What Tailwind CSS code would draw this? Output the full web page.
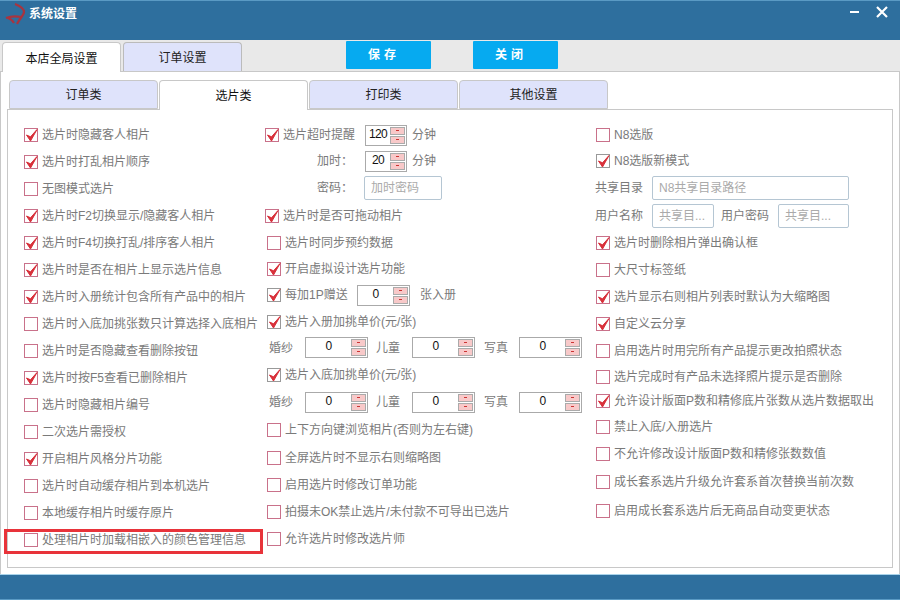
<!DOCTYPE html>
<html lang="zh-CN">
<head>
    <meta charset="UTF-8">
    <title>系统设置</title>
    <script src="https://cdn.jsdelivr.net/npm/@tailwindcss/browser@4"></script>
</head>
<body class="w-[900px] h-[600px] overflow-hidden bg-white font-['Liberation_Sans','Noto_Sans_CJK_SC',sans-serif] text-[12px] text-[#7a7a7a]">
<div id="win" class="relative w-[900px] h-[600px] flex flex-col">
    <!-- title bar -->
    <div class="h-[40px] bg-[#2e6f9e] border-t border-[#5a9ac4] flex items-start px-[5px] text-white">
        <svg class="w-[22px] h-[24px] mt-[2px]" viewBox="0 0 22 24"><path d="M10 1 C15 3 19 6 19 9 C19 12 15 15 12 21 M1 15 C6 13 11 13 16 14 M3 15 C6 16 8 18 9 20" fill="none" stroke="#a8343f" stroke-width="2.2"/></svg>
        <span class="ml-[2px] mt-[4px] font-bold">系统设置</span>
        <div class="ml-auto flex items-center gap-[16px] mt-[5px] pr-[7px]">
            <svg class="w-[10px] h-[10px]" viewBox="0 0 10 10"><rect x="0" y="4" width="9" height="2" fill="#fff"/></svg>
            <svg class="w-[12px] h-[12px]" viewBox="0 0 12 12"><path d="M1 1 L11 11 M11 1 L1 11" stroke="#fff" stroke-width="2.2"/></svg>
        </div>
    </div>
    <!-- outer tabs -->
    <div class="h-[32px] bg-[#e9e9e9] border-b border-[#c8c8c8] flex items-end pl-[2px] gap-[2px] relative">
        <div class="w-[119px] h-[30px] -mb-px pt-[2px] bg-white border border-b-0 border-[#c8c8c8] rounded-t-[4px] flex items-center justify-center text-[#111]">本店全局设置</div>
        <div class="w-[119px] h-[29px] pt-[1px] bg-[#dfe3fb] border border-b-0 border-[#bbb] rounded-t-[4px] flex items-center justify-center text-[#222]">订单设置</div>
        <button class="ml-[102px] mb-[2px] w-[85px] h-[28px] pr-[9px] bg-[#06aaf0] rounded-[1px] text-white font-bold tracking-[4px]">保存</button>
        <button class="ml-[40px] mb-[2px] w-[85px] h-[28px] pr-[9px] bg-[#06aaf0] rounded-[1px] text-white font-bold tracking-[4px]">关闭</button>
    </div>
    <!-- body -->
    <div class="flex-1 bg-white border-x border-[#c8c8c8] px-[6px] pt-[8px] flex flex-col">
        <div id="subtabs" class="h-[29px] flex gap-[1px] pl-[2px]"></div>
        <div class="h-[459px] border border-[#c8c8c8] flex">
            <div id="c1" class="w-[257px] pl-[16px] pt-[11px] flex flex-col"></div>
            <div id="c2" class="w-[330px] pt-[12px] flex flex-col"></div>
            <div id="c3" class="flex-1 pt-[11px] flex flex-col"></div>
        </div>
    </div>
    <!-- footer -->
    <div class="h-[26px] bg-[#2e6f9e] border-t border-b border-t-[#a9d3ea] border-b-[#5a9ac4]"></div>
    <!-- highlight annotation -->
    <div class="absolute left-[4px] top-[529px] w-[259px] h-[25px] border-[3px] border-[#e8333a]"></div>
</div>
<script>
    const check = `<svg class="absolute left-0 top-[-1px] w-[13px] h-[14px]" viewBox="0 0 13 14"><path d="M1.5 7 L5.5 13 L12 1.5 L5.5 8.8 Z" fill="#d8303a" stroke="#d8303a" stroke-width="1"/></svg>`
    const cb = (on, gray) => `<span class="relative shrink-0 w-[14px] h-[14px] bg-white border ${gray ? 'border-[#999]' : 'border-[#c9718a]'}">${on ? check : ''}</span>`
    const row = (h, ml, on, text, gray) => `<div class="flex items-center" style="height:${h}px;margin-left:${ml}px">${cb(on, gray)}<span class="ml-[4px] whitespace-nowrap">${text}</span></div>`
    const arrows = `<span class="flex flex-col gap-[1px] mr-[1px]"><span class="block w-[15px] h-[8px] bg-[#f8c9c9] border border-[#aaa] relative"><span class="absolute left-[5px] top-[2px] w-[3px] h-[1px] bg-[#c33]"></span></span><span class="block w-[15px] h-[8px] bg-[#f8c9c9] border border-[#aaa] relative"><span class="absolute left-[5px] top-[2px] w-[3px] h-[1px] bg-[#c33]"></span></span></span>`
    const spin = (w, v, left) => `<span class="shrink-0 h-[21px] border border-[#aaa] bg-white flex items-center justify-between text-[#111] tracking-[-0.7px]" style="width:${w}px"><span class="${left ? 'pl-[3px]' : 'flex-1 text-center'} -mt-[3px]">${v}</span>${arrows}</span>`

    // sub tabs
    document.getElementById('subtabs').innerHTML = [['订单类', 0], ['选片类', 1], ['打印类', 0], ['其他设置', 0]].map(([t, a]) =>
        `<div class="w-[149px] ${a ? 'h-[30px] pt-[1px] bg-white text-[#111] border-b-0' : 'h-[29px] bg-[#dfe3fb] text-[#222]'} relative z-10 border border-[#c8c8c8] rounded-t-[4px] flex items-center justify-center">${t}</div>`).join('')

    // left column
    const c1 = [[1, '选片时隐藏客人相片'], [1, '选片时打乱相片顺序'], [0, '无图模式选片'], [1, '选片时F2切换显示/隐藏客人相片'], [1, '选片时F4切换打乱/排序客人相片'], [1, '选片时是否在相片上显示选片信息'], [1, '选片时入册统计包含所有产品中的相片'], [0, '选片时入底加挑张数只计算选择入底相片'], [0, '选片时是否隐藏查看删除按钮'], [1, '选片时按F5查看已删除相片'], [0, '选片时隐藏相片编号'], [0, '二次选片需授权'], [1, '开启相片风格分片功能'], [0, '选片时自动缓存相片到本机选片'], [0, '本地缓存相片时缓存原片'], [0, '处理相片时加载相嵌入的颜色管理信息']]
    document.getElementById('c1').innerHTML = c1.map(([on, t]) => row(27, 0, on, t)).join('')

    // middle column
    const label = (w, t) => `<span class="shrink-0 whitespace-nowrap" style="width:${w}px">${t}</span>`
    const priceRow = (h) => `<div class="flex items-center ml-[4px]" style="height:${h}px">${label(36, '婚纱')}${spin(63, 0)}<span class="ml-[8px] w-[36px]">儿童</span>${spin(63, 0)}<span class="ml-[9px] w-[35px]">写真</span>${spin(63, 0)}</div>`
    const inputBox = (w, ph) => `<span class="shrink-0 h-[24px] border border-[#b5c6d3] rounded-[2px] bg-white flex items-center px-[6px] text-[#aaa] whitespace-nowrap overflow-hidden" style="width:${w}px">${ph}</span>`
    document.getElementById('c2').innerHTML = [
        `<div class="flex items-center h-[26px]">${cb(1)}<span class="ml-[4px] w-[82px]">选片超时提醒</span>${spin(42, 120, 1)}<span class="ml-[5px]">分钟</span></div>`,
        `<div class="flex items-center h-[26px] ml-[52px]">${label(48, '加时：')}${spin(42, 20, 1).replace('pl-[3px]', 'pl-[6px]')}<span class="ml-[5px]">分钟</span></div>`,
        `<div class="flex items-center h-[28px] ml-[52px]">${label(47, '密码：')}${inputBox(78, '加时密码')}</div>`,
        row(27, 0, 1, '选片时是否可拖动相片'),
        row(27, 2, 0, '选片时同步预约数据'),
        row(25, 2, 1, '开启虚拟设计选片功能'),
        `<div class="flex items-center h-[28px] ml-[2px]">${cb(1, 1)}<span class="ml-[4px] w-[72px]">每加1P赠送</span>${spin(53, 0)}<span class="ml-[10px]">张入册</span></div>`,
        row(25, 2, 1, '选片入册加挑单价(元/张)', 1),
        priceRow(27),
        row(28, 2, 1, '选片入底加挑单价(元/张)', 1),
        priceRow(26),
        row(30, 2, 0, '上下方向键浏览相片(否则为左右键)'),
        row(26, 2, 0, '全屏选片时不显示右则缩略图'),
        row(27, 2, 0, '启用选片时修改订单功能'),
        row(27, 2, 0, '拍摄未OK禁止选片/未付款不可导出已选片'),
        row(27, 2, 0, '允许选片时修改选片师'),
    ].join('')

    // right column
    document.getElementById('c3').innerHTML = [
        row(27, 1, 0, 'N8选版'),
        row(26, 1, 1, 'N8选版新模式', 1),
        `<div class="flex items-center h-[28px]">${label(57, '共享目录')}${inputBox(197, 'N8共享目录路径')}</div>`,
        `<div class="flex items-center h-[27px]">${label(57, '用户名称')}${inputBox(62, '共享目...')}<span class="ml-[7px] w-[57px]">用户密码</span>${inputBox(71, '共享目...')}</div>`,
        row(27, 1, 1, '选片时删除相片弹出确认框'),
        row(27, 1, 0, '大尺寸标签纸'),
        row(27, 1, 1, '选片显示右则相片列表时默认为大缩略图'),
        row(27, 1, 1, '自定义云分享'),
        row(27, 1, 0, '启用选片时用完所有产品提示更改拍照状态'),
        row(25, 1, 0, '选片完成时有产品未选择照片提示是否删除'),
        row(24, 1, 1, '允许设计版面P数和精修底片张数从选片数据取出'),
        row(28, 1, 0, '禁止入底/入册选片'),
        row(26, 1, 0, '不允许修改设计版面P数和精修张数数值'),
        row(29, 1, 0, '成长套系选片升级允许套系首次替换当前次数'),
        row(30, 1, 0, '启用成长套系选片后无商品自动变更状态'),
    ].join('')
</script>
</body>
</html>
